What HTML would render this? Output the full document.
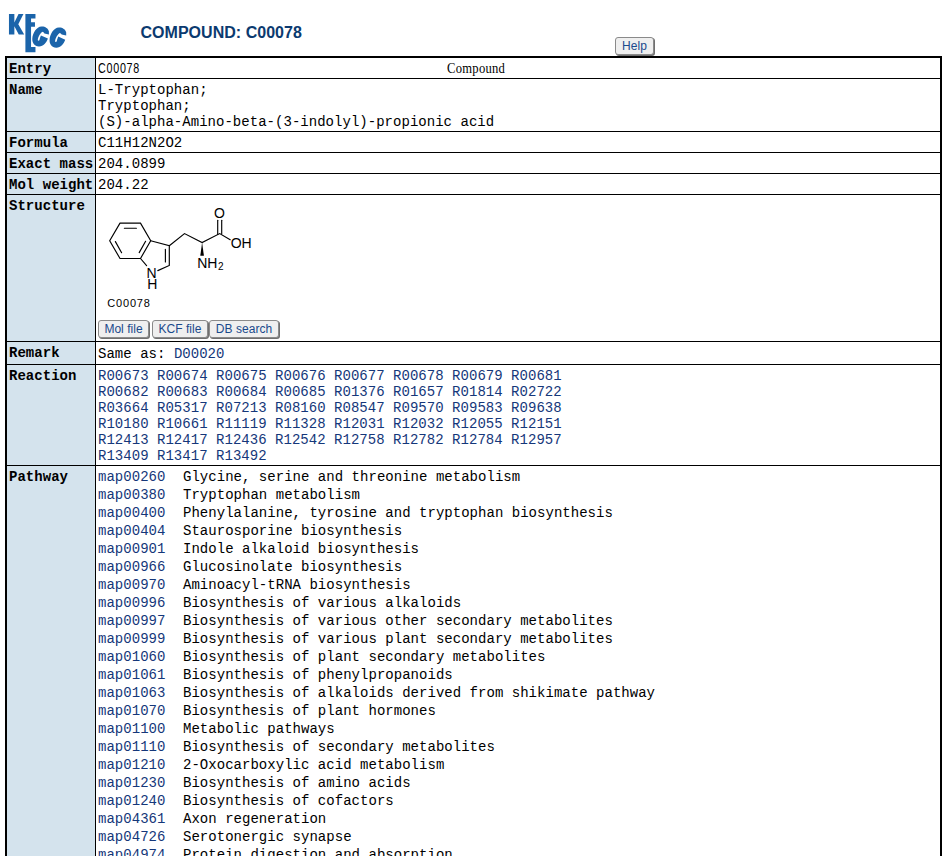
<!DOCTYPE html>
<html><head><meta charset="utf-8">
<style>
html,body{margin:0;padding:0;background:#fff;}
body{width:948px;height:856px;overflow:hidden;position:relative;font-family:"Liberation Mono",monospace;font-size:14px;color:#000;letter-spacing:0.028px;}
.abs{position:absolute;}
#title{left:140.5px;top:24px;font-family:"Liberation Sans",sans-serif;font-weight:bold;font-size:16px;color:#0b3a6f;line-height:18px;white-space:nowrap;}
.btn{position:absolute;box-sizing:border-box;border:1px solid #8a8a8a;border-radius:3px;background:#efefef;box-shadow:1px 1px 0 #6f6f6f;font-family:"Liberation Sans",sans-serif;font-size:12px;color:#1a4a8c;line-height:16px;text-align:center;white-space:nowrap;}
#frame{left:5px;top:56px;width:933px;height:820px;border:2px solid #000;border-bottom:none;background:#fff;}
#hcol{left:7px;top:58px;width:88px;height:800px;background:#d4e3ed;}
#vline{left:95px;top:58px;width:1px;height:800px;background:#000;}
.hl{position:absolute;left:7px;width:933px;height:1px;background:#000;}
.th{position:absolute;left:9px;font-weight:bold;line-height:16px;white-space:nowrap;}
.td{position:absolute;left:98px;line-height:16px;white-space:pre;}
a{color:#15377a;text-decoration:none;}
</style></head><body>

<!-- logo -->
<svg class="abs" style="left:0;top:0" width="80" height="56" viewBox="0 0 80 56">
<g fill="#1b64aa">
<polygon points="8.96,13.96 14.36,13.96 14.36,22.55 18.53,13.96 23.44,13.96 18.29,24.27 24.18,34.58 18.78,34.58 14.36,26.23 14.36,34.58 8.96,34.58"/>
<polygon points="25.4,13.96 35.47,13.96 35.47,18.6 31.05,18.6 31.05,22.3 34.98,22.3 34.98,26.7 31.05,26.7 31.05,47.1 35.47,47.1 35.47,52.25 25.4,52.25"/>
</g>
<g fill="#1b64aa"><path d="M41.5 26.4 C45 26.2 48.3 28.3 48.9 31.3 L48.9 34.4 L44.4 33.4 C43.8 32.6 43.2 31.8 42.5 31.8 C40.6 32.6 38 37 37.8 40 C37.8 40.8 38.6 40.9 39.4 40.3 L39.8 38.6 L40.9 35.4 L47.9 38.5 C46.5 42.6 43.5 46.3 39.1 46.5 C34.5 46.6 32 42.5 32.3 38.5 C32.6 33 36.5 26.6 41.5 26.4 Z"/><path transform="translate(17.3,1.2)" d="M41.5 26.4 C45 26.2 48.3 28.3 48.9 31.3 L48.9 34.4 L44.4 33.4 C43.8 32.6 43.2 31.8 42.5 31.8 C40.6 32.6 38 37 37.8 40 C37.8 40.8 38.6 40.9 39.4 40.3 L39.8 38.6 L40.9 35.4 L47.9 38.5 C46.5 42.6 43.5 46.3 39.1 46.5 C34.5 46.6 32 42.5 32.3 38.5 C32.6 33 36.5 26.6 41.5 26.4 Z"/></g>
</svg>

<div id="title" class="abs">COMPOUND: C00078</div>
<div class="btn" style="left:615px;top:37px;width:39px;height:18px;">Help</div>

<div id="frame" class="abs"></div>
<div id="hcol" class="abs"></div>
<div id="vline" class="abs"></div>
<div class="hl" style="top:78px"></div>
<div class="hl" style="top:131px"></div>
<div class="hl" style="top:152px"></div>
<div class="hl" style="top:173px"></div>
<div class="hl" style="top:194px"></div>
<div class="hl" style="top:341px"></div>
<div class="hl" style="top:364px"></div>
<div class="hl" style="top:465px"></div>

<!-- headers -->
<div class="th" style="top:61px">Entry</div>
<div class="th" style="top:82px">Name</div>
<div class="th" style="top:135px">Formula</div>
<div class="th" style="top:156px">Exact mass</div>
<div class="th" style="top:177px">Mol weight</div>
<div class="th" style="top:198px">Structure</div>
<div class="th" style="top:345px">Remark</div>
<div class="th" style="top:368px">Reaction</div>
<div class="th" style="top:469px">Pathway</div>

<!-- data -->
<div class="td" style="top:60px;left:97.5px;font-family:'Liberation Sans',sans-serif;font-size:14.5px;transform:scaleX(0.74);transform-origin:0 0;letter-spacing:1.0px">C00078</div>
<div class="td" style="top:61px;left:447px;font-family:'Liberation Serif',serif;font-size:14px;transform:scaleX(0.9);transform-origin:0 0;letter-spacing:0.3px">Compound</div>
<div class="td" style="top:82px">L-Tryptophan;
Tryptophan;
(S)-alpha-Amino-beta-(3-indolyl)-propionic acid</div>
<div class="td" style="top:135px">C11H12N2O2</div>
<div class="td" style="top:156px">204.0899</div>
<div class="td" style="top:177px">204.22</div>

<svg class="abs" style="left:0;top:0;overflow:visible" width="300" height="320" viewBox="0 0 300 320">
<g stroke="#000" stroke-width="1.15" fill="none" stroke-linecap="round">
<polyline points="120,223.1 140.5,223.1 150.7,240.8 140.5,258.5 120,258.5 109.7,240.8 120,223.1"/>
<line x1="124.4" y1="228.2" x2="136.4" y2="228.2"/>
<line x1="115.4" y1="241.6" x2="121.6" y2="252.7"/>
<line x1="145.6" y1="241.3" x2="139.2" y2="252.6"/>
<polyline points="150.7,240.8 169.3,245.7 169.3,265.5 157.8,270.6"/>
<line x1="140.5" y1="258.5" x2="146.6" y2="265.6"/>
<line x1="165.4" y1="249.4" x2="165.4" y2="262"/>
<polyline points="169.3,245.7 184.5,233.6 202.1,242.6 219.7,233.6 230.2,239.7"/>
<line x1="217.7" y1="220.2" x2="217.7" y2="234.4"/>
<line x1="221.7" y1="220.2" x2="221.7" y2="233.8"/>
</g>
<polygon points="202.1,242.6 200.3,255.8 203.9,255.8" fill="#000"/>
<g font-family="Liberation Sans" font-size="14" fill="#000">
<text x="213.9" y="218">O</text>
<text x="230.7" y="247.5">OH</text>
<text x="197.2" y="267.6">NH</text>
<text x="217.9" y="270.4" font-size="10">2</text>
<text x="146.6" y="277.7">N</text>
<text x="147.2" y="288.8">H</text>
</g>
<text x="107.3" y="306.8" font-family="Liberation Sans" font-size="11" letter-spacing="0.8" fill="#000">C00078</text>
</svg>
<div class="btn" style="left:98px;top:320px;width:51px;height:18px;">Mol file</div>
<div class="btn" style="left:152px;top:320px;width:56px;height:18px;">KCF file</div>
<div class="btn" style="left:209px;top:320px;width:70px;height:18px;">DB search</div>

<div class="td" style="top:346px">Same as: <a>D00020</a></div>
<div class="td" style="top:368px"><a>R00673</a> <a>R00674</a> <a>R00675</a> <a>R00676</a> <a>R00677</a> <a>R00678</a> <a>R00679</a> <a>R00681</a>
<a>R00682</a> <a>R00683</a> <a>R00684</a> <a>R00685</a> <a>R01376</a> <a>R01657</a> <a>R01814</a> <a>R02722</a>
<a>R03664</a> <a>R05317</a> <a>R07213</a> <a>R08160</a> <a>R08547</a> <a>R09570</a> <a>R09583</a> <a>R09638</a>
<a>R10180</a> <a>R10661</a> <a>R11119</a> <a>R11328</a> <a>R12031</a> <a>R12032</a> <a>R12055</a> <a>R12151</a>
<a>R12413</a> <a>R12417</a> <a>R12436</a> <a>R12542</a> <a>R12758</a> <a>R12782</a> <a>R12784</a> <a>R12957</a>
<a>R13409</a> <a>R13417</a> <a>R13492</a></div>
<div class="td" style="top:468px;line-height:18px"><a>map00260</a>
<a>map00380</a>
<a>map00400</a>
<a>map00404</a>
<a>map00901</a>
<a>map00966</a>
<a>map00970</a>
<a>map00996</a>
<a>map00997</a>
<a>map00999</a>
<a>map01060</a>
<a>map01061</a>
<a>map01063</a>
<a>map01070</a>
<a>map01100</a>
<a>map01110</a>
<a>map01210</a>
<a>map01230</a>
<a>map01240</a>
<a>map04361</a>
<a>map04726</a>
<a>map04974</a></div>
<div class="td" style="top:468px;left:183px;line-height:18px">Glycine, serine and threonine metabolism
Tryptophan metabolism
Phenylalanine, tyrosine and tryptophan biosynthesis
Staurosporine biosynthesis
Indole alkaloid biosynthesis
Glucosinolate biosynthesis
Aminoacyl-tRNA biosynthesis
Biosynthesis of various alkaloids
Biosynthesis of various other secondary metabolites
Biosynthesis of various plant secondary metabolites
Biosynthesis of plant secondary metabolites
Biosynthesis of phenylpropanoids
Biosynthesis of alkaloids derived from shikimate pathway
Biosynthesis of plant hormones
Metabolic pathways
Biosynthesis of secondary metabolites
2-Oxocarboxylic acid metabolism
Biosynthesis of amino acids
Biosynthesis of cofactors
Axon regeneration
Serotonergic synapse
Protein digestion and absorption</div>

</body></html>
